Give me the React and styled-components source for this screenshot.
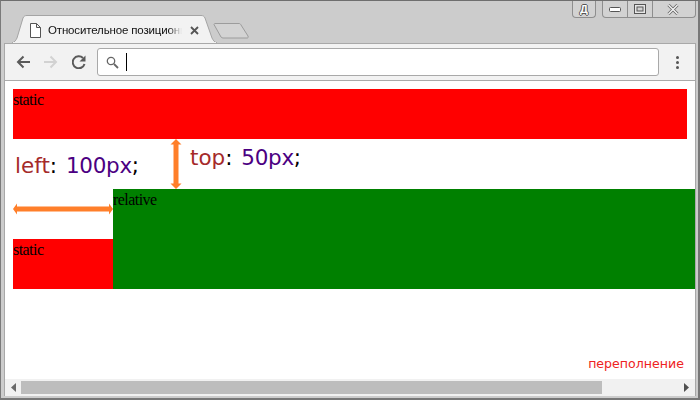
import React from "react";
import styled, { createGlobalStyle } from "styled-components";

const GlobalStyle = createGlobalStyle`
  html, body {
    margin: 0;
    padding: 0;
    overflow: hidden;
    background: #ffffff;
  }
`;

const BrowserWindow = styled.div`
  width: 700px;
  height: 400px;
  box-sizing: border-box;
  display: flex;
  flex-direction: column;
  background: #cccccc;
  border-top: 1px solid #6e6e6e;
  border-left: 1px solid #7a7a7a;
  border-right: 2px solid #777777;
  border-bottom: 2px solid #777777;
  padding: 0 2px 2px 3px;
  overflow: hidden;
`;

const TabStrip = styled.div`
  position: relative;
  height: 42px;
  flex: none;
  display: flex;
  align-items: flex-start;
  padding-left: 8px;
`;

const Tab = styled.div`
  position: relative;
  width: 205px;
  height: 28px;
  margin-top: 14px;
  flex: none;
  display: flex;
  align-items: center;
  padding-left: 18px;
  box-sizing: border-box;
  z-index: 1;
`;

const TabShape = styled.svg`
  position: absolute;
  left: 0;
  top: 0;
`;

const TabIcon = styled.svg`
  position: relative;
  flex: none;
  margin-top: 2px;
`;

const TabTitle = styled.div`
  position: relative;
  width: 134px;
  margin-left: 7px;
  margin-top: 2px;
  flex: none;
  white-space: nowrap;
  overflow: hidden;
  font: 11.5px "Liberation Sans", Arial, sans-serif;
  letter-spacing: -0.15px;
  color: #111111;
  -webkit-mask-image: linear-gradient(to right, #000 90%, transparent 100%);
  mask-image: linear-gradient(to right, #000 90%, transparent 100%);
`;

const TabClose = styled.svg`
  position: relative;
  flex: none;
  margin-left: 8px;
  margin-top: 2px;
`;

const NewTab = styled.svg`
  flex: none;
  margin-left: -4px;
  margin-top: 22px;
`;

const CaptionArea = styled.div`
  margin-left: auto;
  display: flex;
  gap: 6px;
`;

const CaptionGroup = styled.div`
  display: flex;
  height: 16px;
  background: #d2d2d2;
  border: 1px solid #8e8e8e;
  border-top: none;
  border-radius: 0 0 4px 4px;
`;

const CaptionButton = styled.div`
  width: ${(p) => p.$w}px;
  display: flex;
  align-items: center;
  justify-content: center;
  box-sizing: content-box;
  border-left: ${(p) => (p.$divided ? "1px solid #8e8e8e" : "none")};
`;

const CloseGlyph = styled.svg`
  margin-right: 3px;
`;

const ProfileLetter = styled.span`
  font: bold 11px "Liberation Sans", Arial, sans-serif;
  color: #ffffff;
  text-shadow: 1px 0 0 #555, -1px 0 0 #555, 0 1px 0 #555, 0 -1px 0 #555;
`;

const Toolbar = styled.div`
  height: 38px;
  flex: none;
  box-sizing: border-box;
  display: flex;
  align-items: center;
  background: #f2f2f2;
  border-top: 1px solid #a8a8a8;
  border-bottom: 1px solid #aaaaaa;
  padding-left: 11px;
`;

const Content = styled.div`
  flex: 1;
  min-height: 0;
  display: flex;
  flex-direction: column;
  border-left: 1px solid #a8a8a8;
  border-right: 1px solid #a8a8a8;
`;

const NavButton = styled.svg`
  flex: none;
  margin-right: ${(p) => p.$gap}px;
`;

const Omnibox = styled.div`
  width: 562px;
  height: 28px;
  box-sizing: border-box;
  flex: none;
  display: flex;
  align-items: center;
  gap: 7px;
  padding-left: 8px;
  background: #ffffff;
  border: 1px solid #a9a9a9;
  border-radius: 3px;
`;

const Caret = styled.div`
  width: 1px;
  height: 18px;
  background: #000000;
`;

const MenuDots = styled.div`
  margin-left: 17px;
  display: flex;
  flex-direction: column;
  gap: 2px;
`;

const Dot = styled.div`
  width: 3px;
  height: 3px;
  border-radius: 50%;
  background: #555555;
`;

const Viewport = styled.div`
  position: relative;
  flex: 1;
  min-height: 0;
  overflow: hidden;
  background: #ffffff;
  padding: 8px;
  font: 16px/22px "Liberation Serif", "Times New Roman", serif;
  letter-spacing: -0.55px;
  color: #000000;
`;

const StaticBlock = styled.div`
  height: 50px;
  background: #ff0000;
`;

const RelativeBlock = styled.div`
  position: relative;
  left: 100px;
  top: 50px;
  height: 100px;
  background: #008000;
`;

const CodeLabel = styled.div`
  position: absolute;
  left: ${(p) => p.$x}px;
  top: ${(p) => p.$y}px;
  font: 21.5px "DejaVu Sans", Verdana, sans-serif;
  letter-spacing: 0;
  word-spacing: 2px;
  white-space: nowrap;
  color: #000000;
`;

const Prop = styled.span`
  color: #a52a2a;
`;

const Value = styled.span`
  color: #4b0082;
  letter-spacing: -0.3px;
`;

const Arrow = styled.svg`
  position: absolute;
  left: ${(p) => p.$x}px;
  top: ${(p) => p.$y}px;
`;

const OverflowNote = styled.div`
  position: absolute;
  right: 11px;
  bottom: 8px;
  font: 12.6px "DejaVu Sans", Verdana, sans-serif;
  letter-spacing: 0;
  color: #ee2222;
`;

const Scrollbar = styled.div`
  height: 17px;
  flex: none;
  display: flex;
  align-items: center;
  background: #f1f1f1;
`;

const ScrollArrow = styled.svg`
  flex: none;
  margin: ${(p) => p.$margin};
`;

const ScrollThumb = styled.div`
  width: 581px;
  height: 13px;
  background: #bdbdbd;
`;

const ScrollTrack = styled.div`
  flex: 1;
`;

const App = () => {
  return (
    <>
      <GlobalStyle />
      <BrowserWindow>
        <TabStrip>
          <Tab>
            <TabShape width="205" height="28" viewBox="0 0 205 28">
              <path d="M0 28 C3 27 4 25 5 23 L11 3 C12 1 13 0.5 15 0.5 L189 0.5 C191 0.5 192 1 193 3 L200 23 C201 25 202 27 205 28 Z" fill="#f2f2f2" stroke="#a4a4a4" />
              <rect x="1" y="27" width="203" height="2" fill="#f2f2f2" />
            </TabShape>
            <TabIcon width="11" height="15" viewBox="0 0 11 15">
              <path d="M0.5 0.5 H6.5 L10.5 4.5 V14.5 H0.5 Z M6.5 0.5 V4.5 H10.5" fill="#ffffff" stroke="#555555" />
            </TabIcon>
            <TabTitle>Относительное позиционирование</TabTitle>
            <TabClose width="9" height="9" viewBox="0 0 9 9">
              <path d="M1 1 L8 8 M8 1 L1 8" stroke="#555555" strokeWidth="1.8" />
            </TabClose>
          </Tab>
          <NewTab width="36" height="16" viewBox="0 0 36 16">
            <path d="M1 1.5 C1 1 1.500 0.5 2 0.5 L26 0.5 C27 0.5 27.500 1 28 2 L35 13 C35.500 14.500 35 15 34 15 L10 15 C9 15 8.500 14.500 8 14 Z" fill="#d3d3d3" stroke="#9c9c9c" />
          </NewTab>
          <CaptionArea>
            <CaptionGroup>
              <CaptionButton $w={22}>
                <ProfileLetter>Д</ProfileLetter>
              </CaptionButton>
            </CaptionGroup>
            <CaptionGroup>
              <CaptionButton $w={24}>
                <svg width="12" height="5" viewBox="0 0 12 5">
                  <rect x="0.5" y="0.5" width="11" height="4" rx="1" fill="#ffffff" stroke="#555555" />
                </svg>
              </CaptionButton>
              <CaptionButton $w={24} $divided>
                <svg width="12" height="10" viewBox="0 0 12 10">
                  <rect x="0.500" y="0.500" width="11" height="9" fill="#e6e6e6" stroke="#555555" />
                  <rect x="3" y="3" width="6" height="4" fill="#d2d2d2" stroke="#555555" />
                </svg>
              </CaptionButton>
              <CaptionButton $w={42} $divided>
                <CloseGlyph width="12" height="11" viewBox="0 0 12 11">
                  <path d="M1.500 1 L10.500 10 M10.500 1 L1.500 10" stroke="#666666" strokeWidth="3" />
                  <path d="M1.500 1 L10.500 10 M10.500 1 L1.500 10" stroke="#f4f4f4" strokeWidth="1.400" />
                </CloseGlyph>
              </CaptionButton>
            </CaptionGroup>
          </CaptionArea>
        </TabStrip>

        <Content>
          <Toolbar>
            <NavButton $gap={14} width="14" height="14" viewBox="0 0 14 14">
              <path d="M14 7 H2 M7.500 1.500 L2 7 L7.500 12.500" fill="none" stroke="#5a5a5a" strokeWidth="2" />
            </NavButton>
            <NavButton $gap={14} width="14" height="14" viewBox="0 0 14 14">
              <path d="M0 7 H12 M6.500 1.500 L12 7 L6.500 12.500" fill="none" stroke="#d2d2d2" strokeWidth="2" />
            </NavButton>
            <NavButton $gap={11} width="14" height="14" viewBox="0 0 14 14">
              <path d="M12.500 9 A6 6 0 1 1 11 3" fill="none" stroke="#5a5a5a" strokeWidth="2" />
              <path d="M13.500 0.500 V6.500 H7.500 Z" fill="#5a5a5a" />
            </NavButton>
            <Omnibox>
              <svg width="13" height="13" viewBox="0 0 13 13">
                <circle cx="5" cy="5" r="3.700" fill="none" stroke="#666666" strokeWidth="1.300" />
                <path d="M8 8 L12 12" stroke="#666666" strokeWidth="1.800" />
              </svg>
              <Caret />
            </Omnibox>
            <MenuDots>
              <Dot />
              <Dot />
              <Dot />
            </MenuDots>
          </Toolbar>

          <Viewport>
            <StaticBlock>static</StaticBlock>
            <RelativeBlock>relative</RelativeBlock>
            <StaticBlock>static</StaticBlock>

            <CodeLabel $x={10} $y={72}>
              <Prop>left</Prop>: <Value>100px</Value>;
            </CodeLabel>
            <CodeLabel $x={185} $y={64}>
              <Prop>top</Prop>: <Value>50px</Value>;
            </CodeLabel>

            <Arrow $x={165} $y={58} width="12" height="50" viewBox="0 0 12 50">
              <path d="M6 0 L11.500 5.500 H8.500 V44.500 H11.500 L6 50 L0.500 44.500 H3.500 V5.500 H0.500 Z" fill="#ff7f2a" />
            </Arrow>
            <Arrow $x={8} $y={122} width="100" height="12" viewBox="0 0 100 12">
              <path d="M0 6 L4 0.500 V3.500 H96 V0.500 L100 6 L96 11.500 V8.500 H4 V11.500 Z" fill="#ff7f2a" />
            </Arrow>

            <OverflowNote>переполнение</OverflowNote>
          </Viewport>

          <Scrollbar>
            <ScrollArrow $margin="0 5px 0 6px" width="5" height="9" viewBox="0 0 5 9">
              <path d="M5 0 V9 L0 4.500 Z" fill="#6a6a6a" />
            </ScrollArrow>
            <ScrollThumb />
            <ScrollTrack />
            <ScrollArrow $margin="0 6px 0 0" width="5" height="9" viewBox="0 0 5 9">
              <path d="M0 0 V9 L5 4.500 Z" fill="#505050" />
            </ScrollArrow>
          </Scrollbar>
        </Content>
      </BrowserWindow>
    </>
  );
};

export default App;
